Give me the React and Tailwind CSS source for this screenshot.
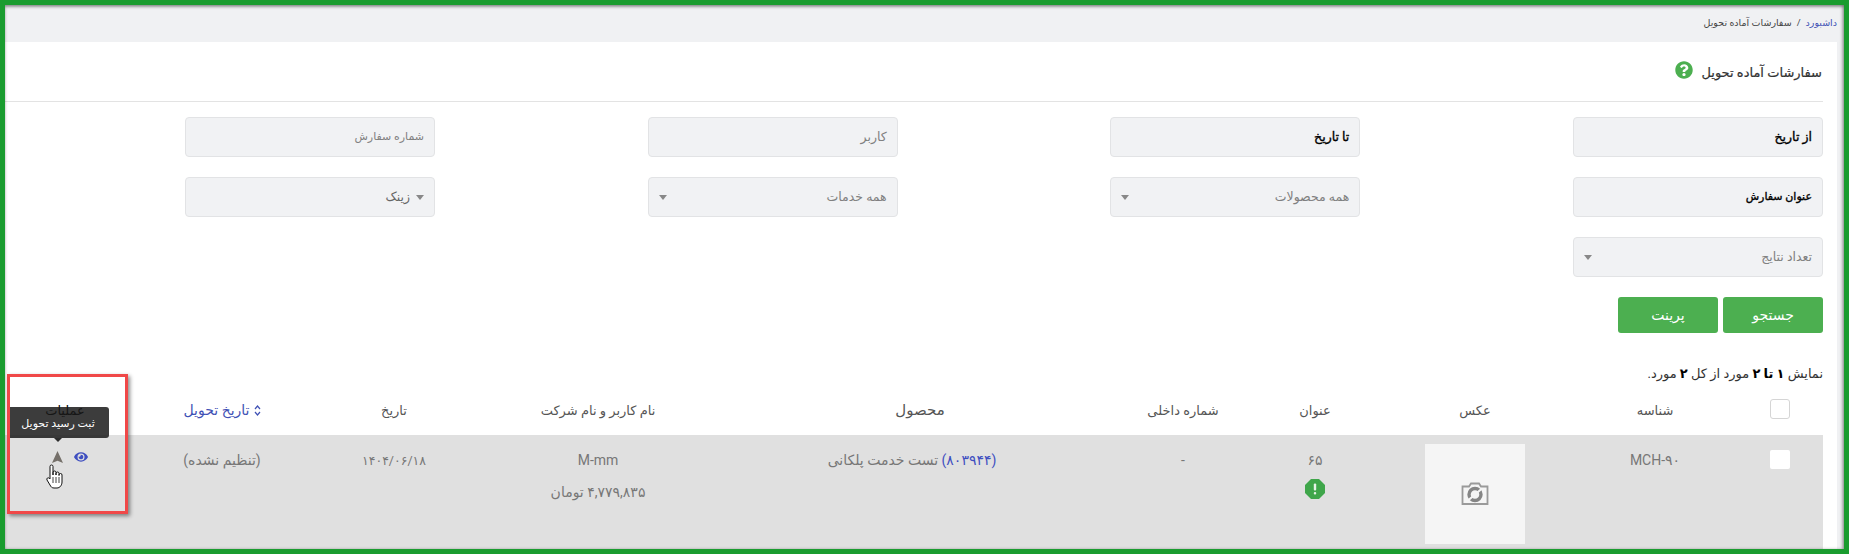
import {FaEye, FaQuestionCircle} from "react-icons/fa";

const Caret = () => (
  <span className="h-0 w-0 border-x-[4px] border-t-[5px] border-x-transparent border-t-[#888]" />
);

const Field = ({label, strong, select, caretRight, small}) => (
  <div
    className={`flex h-10 w-[250px] items-center justify-between rounded-[4px] border border-[#e2e3e5] bg-[#f1f2f4] pl-[10px] pr-[10px] ${
      small ? "text-[11px]" : "text-[12.5px]"
    } ${strong ? "text-black [-webkit-text-stroke:0.35px_#000]" : "text-[#808080]"}`}
  >
    {caretRight ? (
      <div className="flex items-center gap-[6px] text-[#666]">
        <Caret />
        <span>{label}</span>
      </div>
    ) : (
      <span>{label}</span>
    )}
    {select && <Caret />}
  </div>
);

const NoPhoto = () => (
  <svg width="28" height="24" viewBox="0 0 28 24" fill="none" stroke="#9a9a9a" strokeWidth="1.8">
    <path d="M8 4.500H1.500v17.500h25V4.500H20l-2-3H10z" />
    <circle cx="14" cy="12.500" r="6" stroke="#858585" strokeWidth="3.4" />
    <path d="M7 18.500 21 6.500" stroke="#f5f5f5" strokeWidth="2.2" />
  </svg>
);

const Octagon = () => (
  <svg width="20" height="20" viewBox="0 0 20 20" className="mx-auto mt-[9px]">
    <path d="M6 0h8l6 6v8l-6 6H6l-6-6V6z" fill="#3fa64a" />
    <rect x="8.800" y="4.500" width="2.400" height="7" rx="1" fill="#e6f3e6" />
    <rect x="8.800" y="13" width="2.400" height="2.400" rx="1" fill="#e6f3e6" />
  </svg>
);

const Th = ({children, className = "text-[#555]"}) => (
  <th className={`h-[51px] pt-[2px] text-center align-middle text-[13px] font-normal ${className}`}>
    {children}
  </th>
);

const Td = ({children, className = ""}) => (
  <td className={`pt-[15px] text-center align-top text-[14px] leading-5 text-[#777] ${className}`}>
    {children}
  </td>
);

export default function App() {
  return (
    <div
      dir="rtl"
      className="relative h-[554px] w-[1849px] overflow-hidden border-[5px] border-[#1a9c2f] bg-[#f0f1f3] font-[Roboto,'DejaVu_Sans',sans-serif]"
    >
      <div className="flex h-[37px] items-center pr-[7px] text-[9.500px] text-[#444]">
        <span className="text-[#3f51b5]">داشبورد</span>
        <span className="mx-[5px]">/</span>
        <span>سفارشات آماده تحویل</span>
      </div>

      <div className="mr-[7px] h-[512px] bg-white pr-[14px]">
        <div className="flex h-[60px] items-center gap-[8px] border-b border-[#e3e3e3] pr-[1px] pt-[2px]">
          <h1 className="text-[13px] font-normal text-[#333] [-webkit-text-stroke:0.2px_#333]">سفارشات آماده تحویل</h1>
          <FaQuestionCircle className="mb-[6px] text-[18px] text-[#4caf50]" />
        </div>

        <div className="ml-[180px] grid grid-cols-[repeat(4,250px)] justify-between gap-y-5 pt-[15px]">
          <Field label="از تاریخ" strong />
          <Field label="تا تاریخ" strong />
          <Field label="کاربر" />
          <Field label="شماره سفارش" small />
          <Field label="عنوان سفارش" strong small />
          <Field label="همه محصولات" select />
          <Field label="همه خدمات" select />
          <Field label="زینک" caretRight />
          <Field label="تعداد نتایج" select />
        </div>

        <div className="mt-5 flex gap-[5px]">
          <button className="h-9 w-[100px] rounded-[3px] bg-[#4caf50] text-[14px] text-white">جستجو</button>
          <button className="h-9 w-[100px] rounded-[3px] bg-[#4caf50] text-[14px] text-white">پرینت</button>
        </div>

        <p className="mt-[31px] text-[13px] leading-5 text-[#333]">
          نمایش <b className="text-black">۱</b> <b className="text-black">تا</b> <b className="text-black">۲</b> مورد از کل <b className="text-black">۲</b> مورد.
        </p>

        <table className="w-[1818px] table-fixed border-collapse">
          <colgroup>
            <col className="w-[86px]" />
            <col className="w-[164px]" />
            <col className="w-[196px]" />
            <col className="w-[124px]" />
            <col className="w-[140px]" />
            <col className="w-[386px]" />
            <col className="w-[258px]" />
            <col className="w-[150px]" />
            <col className="w-[194px]" />
            <col className="w-[120px]" />
          </colgroup>
          <thead>
            <tr>
              <Th>
                <span className="mb-[3px] mr-[33px] block h-5 w-5 rounded-[3px] border border-[#d5d5d5] bg-white" />
              </Th>
              <Th>شناسه</Th>
              <Th>عکس</Th>
              <Th>عنوان</Th>
              <Th>شماره داخلی</Th>
              <Th>
                <span className="text-[15px]">محصول</span>
              </Th>
              <Th>نام کاربر و نام شرکت</Th>
              <Th>تاریخ</Th>
              <Th className="text-[#3f51b5]">
                <span className="inline-flex items-center gap-[4px] text-[14px]">
                  <svg width="7" height="11" viewBox="0 0 7 11" fill="none" stroke="#3f51b5" strokeWidth="1.2">
                    <path d="M1 4l2.500-3L6 4M1 7l2.500 3L6 7" />
                  </svg>
                  تاریخ تحویل
                </span>
              </Th>
              <Th className="text-black">عملیات</Th>
            </tr>
          </thead>
          <tbody>
            <tr className="bg-[#e0e0e0]">
              <Td className="pt-4">
                <span className="mr-[33px] block h-[19px] w-5 rounded-[2px] bg-white" />
              </Td>
              <Td>MCH-۹۰</Td>
              <td className="pb-[9px] pt-[9px] align-top">
                <div className="mx-auto flex h-[100px] w-[100px] items-center justify-center bg-[#f5f5f5]">
                  <NoPhoto />
                </div>
              </td>
              <Td>
                ۶۵
                <Octagon />
              </Td>
              <Td>-</Td>
              <Td className="pr-[16px]">
                <span className="text-[#3f4fc0]">(۸۰۳۹۴۴)</span> تست خدمت پلکانی
              </Td>
              <Td>
                M-mm
                <div className="mt-3">۴,۷۷۹,۸۳۵ تومان</div>
              </Td>
              <Td>
                <span className="text-[12.5px]">۱۴۰۴/۰۶/۱۸</span>
              </Td>
              <Td>(تنظیم نشده)</Td>
              <Td className="pl-[9px]">
                <div className="flex items-center justify-center gap-[11px]">
                  <FaEye className="text-[14px] text-[#3f4fc0]" />
                  <svg width="11" height="12" viewBox="0 0 11 12">
                    <path d="M5.500 0 11 12 5.500 9.800 0 12z" fill="#75706a" />
                  </svg>
                </div>
              </Td>
            </tr>
          </tbody>
        </table>
      </div>

      {/* annotation on top of the screenshot */}
      <div className="absolute left-[2px] top-[402px] flex h-[31px] w-[102px] items-center justify-center rounded-[3px] bg-[#1a1a1a]/85 pt-[3px] text-[11px] text-white">
        ثبت رسید تحویل
        <span className="absolute left-[47px] top-full h-0 w-0 border-x-[4px] border-t-[4px] border-x-transparent border-t-[#2c2c2c]" />
      </div>
      <div className="absolute left-[2px] top-[369px] h-[140px] w-[121px] border-[3px] border-[#f04848] shadow-[2px_2px_4px_rgba(0,0,0,0.45)]" />
      <svg className="absolute left-[41px] top-[459px]" width="19" height="25" viewBox="0 0 19 25">
        <path
          d="M4 2.500a1.500 1.500 0 0 1 3 0V11V8.500a1.500 1.500 0 0 1 3 0V11V9.500a1.500 1.500 0 0 1 3 0V11.500V11a1.500 1.500 0 0 1 3 0v7c0 3-2 6-5 6H8c-2 0-3-1-4-3l-3-5c-.8-1.500 1-3 2.200-1.800L4 15z"
          fill="#fff"
          stroke="#111"
          strokeWidth="1"
          strokeLinejoin="round"
        />
        <path d="M7 13v6M10 13v6M13 13v6" stroke="#111" strokeWidth="0.8" />
      </svg>
      <div className="pointer-events-none absolute inset-0 shadow-[inset_0_2px_3px_rgba(0,0,0,0.35),inset_-2px_0_3px_rgba(0,0,0,0.25)]" />
    </div>
  );
}
